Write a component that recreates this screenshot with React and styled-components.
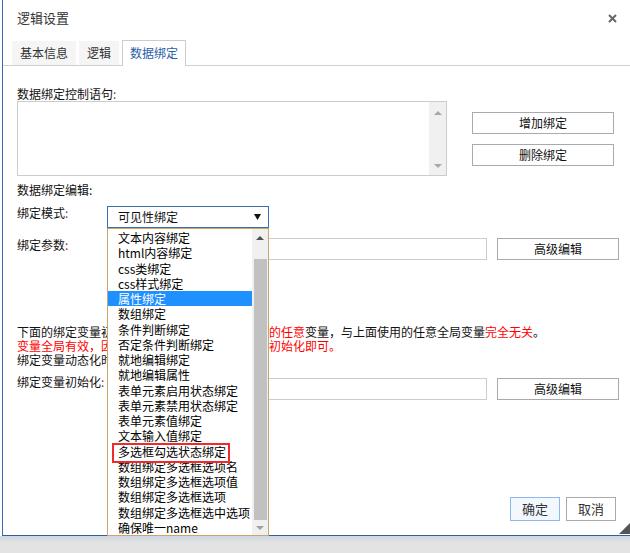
import styled, { createGlobalStyle } from "styled-components"

const modes = [
    "文本内容绑定",
    "html内容绑定",
    "css类绑定",
    "css样式绑定",
    "属性绑定",
    "数组绑定",
    "条件判断绑定",
    "否定条件判断绑定",
    "就地编辑绑定",
    "就地编辑属性",
    "表单元素启用状态绑定",
    "表单元素禁用状态绑定",
    "表单元素值绑定",
    "文本输入值绑定",
    "多选框勾选状态绑定",
    "数组绑定多选框选项名",
    "数组绑定多选框选项值",
    "数组绑定多选框选项",
    "数组绑定多选框选中选项",
    "确保唯一name"
]

export default function App() {
    return (
        <Page>
            <Global />
            <Dialog>
                <Header>
                    <Title>逻辑设置</Title>
                    <Close>
                        <svg width="9" height="9" viewBox="0 0 9 9">
                            <path d="M1 1L8 8M8 1L1 8" stroke="#666" strokeWidth="2" />
                        </svg>
                    </Close>
                </Header>
                <TabBar>
                    <Tab>基本信息</Tab>
                    <Tab>逻辑</Tab>
                    <Tab $active>数据绑定</Tab>
                </TabBar>
                <Body>
                    <TopLabel>数据绑定控制语句<Colon>:</Colon></TopLabel>
                    <StatementRow>
                        <TextBox>
                            <ScrollCol>
                                <Arrow $up $color="#a8a8a8" />
                                <Arrow $color="#a8a8a8" />
                            </ScrollCol>
                        </TextBox>
                        <ButtonCol>
                            <Button $w={142}>增加绑定</Button>
                            <Button $w={142}>删除绑定</Button>
                        </ButtonCol>
                    </StatementRow>
                    <SectionLabel>数据绑定编辑:</SectionLabel>
                    <FieldRow $mt={9}>
                        <FieldLabel>绑定模式<Colon>:</Colon></FieldLabel>
                        <SelectWrap>
                            <Select>
                                可见性绑定
                                <svg width="7" height="6" viewBox="0 0 7 6">
                                    <path d="M0 0H7L3.5 6Z" fill="#111" />
                                </svg>
                            </Select>
                            <DropList>
                                <Items>
                                    {modes.map((m, i) => (
                                        <Item key={m} $selected={i === 4}>
                                            {i === 14 ? <Marked>{m}</Marked> : m}
                                        </Item>
                                    ))}
                                </Items>
                                <ListScroll>
                                    <ArrowBox $h={17}><Arrow $up $color="#505050" /></ArrowBox>
                                    <Thumb />
                                    <ArrowBox $h={15} $bottom><Arrow $color="#a0a0a0" /></ArrowBox>
                                </ListScroll>
                            </DropList>
                        </SelectWrap>
                    </FieldRow>
                    <FieldRow $mt={10}>
                        <FieldLabel>绑定参数<Colon>:</Colon></FieldLabel>
                        <Input readOnly />
                        <Button $w={122} $ml={10}>高级编辑</Button>
                    </FieldRow>
                    <Note>
                        <Line>
                            下面的绑定变量初始化代码用于定义<Red>在本控件内的任意</Red>变量，与上面使用的任意全局变量<Red>完全无关</Red>。
                        </Line>
                        <Line><Red>变量全局有效，因此只需要在绑定语句中声明并初始化即可。</Red></Line>
                        <Line>绑定变量动态化时会自动刷新界面。</Line>
                    </Note>
                    <FieldRow $mt={11}>
                        <FieldLabel $shift={-3}>绑定变量初始化<Colon>:</Colon></FieldLabel>
                        <Input readOnly />
                        <Button $w={122} $ml={10}>高级编辑</Button>
                    </FieldRow>
                    <Footer>
                        <FootButton $primary>确定</FootButton>
                        <FootButton>取消</FootButton>
                    </Footer>
                </Body>
                <Grip />
            </Dialog>
            <Strip />
        </Page>
    )
}

const Global = createGlobalStyle`
    body {
        margin: 0;
        background: #ffffff;
        font-family: "Noto Sans CJK SC", "Liberation Sans", sans-serif;
        color: #111;
    }
`
const Page = styled.div`
    width: 630px;
    height: 553px;
    display: flex;
    flex-direction: column;
    overflow: hidden;
`
const Dialog = styled.div`
    position: relative;
    box-sizing: border-box;
    height: 536px;
    margin-left: 2px;
    background: #fff;
    border-left: 1px solid #3b69ad;
    border-bottom: 1px solid #2f5ea5;
    display: flex;
    flex-direction: column;
`
const Strip = styled.div`
    flex: 1;
    background: linear-gradient(#cfd7e2, #e3e3e3 7px);
`
const Header = styled.div`
    height: 40px;
    flex: none;
    box-sizing: border-box;
    padding: 10px 13px 0 14px;
    display: flex;
    justify-content: space-between;
    align-items: flex-start;
`
const Title = styled.div`
    font-size: 13px;
    line-height: 15px;
    color: #333;
`
const Close = styled.div`
    margin-top: 4px;
    line-height: 0;
`
const TabBar = styled.div`
    flex: none;
    height: 25px;
    padding-left: 9px;
    display: flex;
    align-items: flex-end;
    gap: 3px;
    border-bottom: 1px solid #d0d0d0;
`
const Tab = styled.div`
    box-sizing: border-box;
    height: ${p => (p.$active ? "26px" : "24px")};
    margin-bottom: ${p => (p.$active ? "-1px" : "0")};
    font-size: 12px;
    line-height: 24px;
    color: ${p => (p.$active ? "#2a5ea8" : "#333")};
    background: ${p => (p.$active ? "#fff" : "#f5f5f5")};
    border: ${p => (p.$active ? "1px solid #cccccc" : "none")};
    border-bottom: none;
    padding: ${p => (p.$active ? "0 7px" : "0 8px")};
`
const Body = styled.div`
    flex: 1;
    display: flex;
    flex-direction: column;
    padding: 0 14px 0 14px;
    font-size: 12px;
    line-height: 14px;
`
const Colon = styled.span`
    color: #9a2352;
`
const TopLabel = styled.div`
    margin-top: 21px;
    height: 14px;
`
const StatementRow = styled.div`
    display: flex;
    gap: 25px;
`
const TextBox = styled.div`
    box-sizing: border-box;
    width: 430px;
    height: 75px;
    border: 1px solid #c8cdd2;
    display: flex;
    justify-content: flex-end;
`
const ScrollCol = styled.div`
    width: 17px;
    background: #f0f0f0;
    display: flex;
    flex-direction: column;
    justify-content: space-between;
    align-items: center;
    padding: 9px 0 7px;
    box-sizing: border-box;
`
const Arrow = styled.div`
    width: 0;
    height: 0;
    border-left: 4px solid transparent;
    border-right: 4px solid transparent;
    ${p => (p.$up ? "border-bottom" : "border-top")}: 4px solid ${p => p.$color};
`
const ButtonCol = styled.div`
    margin-top: 11px;
    display: flex;
    flex-direction: column;
    gap: 10px;
`
const Button = styled.div`
    box-sizing: border-box;
    width: ${p => p.$w}px;
    height: 22px;
    margin-left: ${p => p.$ml || 0}px;
    border: 1px solid #aaaaaa;
    background: #fff;
    text-align: center;
    font-size: 12px;
    line-height: 20px;
    color: #111;
    flex: none;
`
const SectionLabel = styled.div`
    margin-top: 7px;
    height: 14px;
`
const FieldRow = styled.div`
    margin-top: ${p => p.$mt}px;
    display: flex;
    align-items: flex-start;
`
const FieldLabel = styled.div`
    width: 90px;
    flex: none;
    margin-top: ${p => p.$shift || 0}px;
    white-space: nowrap;
`
const SelectWrap = styled.div`
    position: relative;
    width: 162px;
    flex: none;
`
const Select = styled.div`
    box-sizing: border-box;
    height: 22px;
    border: 1px solid #3c6eb4;
    padding: 0 7px 0 10px;
    display: flex;
    align-items: center;
    justify-content: space-between;
    font-size: 12px;
`
const DropList = styled.div`
    position: absolute;
    top: 100%;
    left: 0;
    z-index: 10;
    box-sizing: border-box;
    width: 162px;
    height: 308px;
    border: 1px solid #c9a56a;
    background: #fff;
    display: flex;
`
const Items = styled.div`
    flex: 1;
    padding-top: 1px;
`
const Item = styled.div`
    height: 15.25px;
    line-height: 15.25px;
    padding-left: 10px;
    font-size: 12px;
    white-space: nowrap;
    color: ${p => (p.$selected ? "#fff" : "#000")};
    background: ${p => (p.$selected ? "#1e90ff" : "transparent")};
`
const Marked = styled.span`
    position: relative;
    display: inline-block;
    &::after {
        content: "";
        position: absolute;
        top: -1px;
        bottom: -4px;
        left: -6px;
        right: -4px;
        border: 2px solid #f02a2a;
    }
`
const ListScroll = styled.div`
    width: 16px;
    background: #f0f0f0;
    display: flex;
    flex-direction: column;
`
const ArrowBox = styled.div`
    height: ${p => p.$h}px;
    display: flex;
    align-items: center;
    justify-content: center;
    margin-top: ${p => (p.$bottom ? "auto" : "0")};
`
const Thumb = styled.div`
    margin: 13px 1px 0 2px;
    height: 261px;
    background: #c1c1c1;
`
const Input = styled.input`
    box-sizing: border-box;
    flex: none;
    width: 380px;
    height: 22px;
    border: 1px solid #c8cdd2;
    padding: 0;
    margin: 0;
    outline: none;
    background: #fff;
`
const Note = styled.div`
    margin-top: 65px;
`
const Line = styled.div`
    white-space: nowrap;
    height: 14px;
`
const Red = styled.span`
    color: #ff0000;
`
const Footer = styled.div`
    margin-top: auto;
    padding-bottom: 14px;
    display: flex;
    justify-content: flex-end;
    gap: 6px;
`
const FootButton = styled.div`
    box-sizing: border-box;
    width: 50px;
    height: 24px;
    border: 1px solid ${p => (p.$primary ? "#8db9f1" : "#aaaaaa")};
    background: ${p => (p.$primary ? "#f3f8ff" : "#fff")};
    color: #333;
    font-size: 13px;
    line-height: 22px;
    text-align: center;
`
const Grip = styled.div`
    position: absolute;
    right: 0;
    bottom: 1px;
    width: 0;
    height: 0;
    border-style: solid;
    border-width: 0 0 11px 11px;
    border-color: transparent transparent #555 transparent;
`
